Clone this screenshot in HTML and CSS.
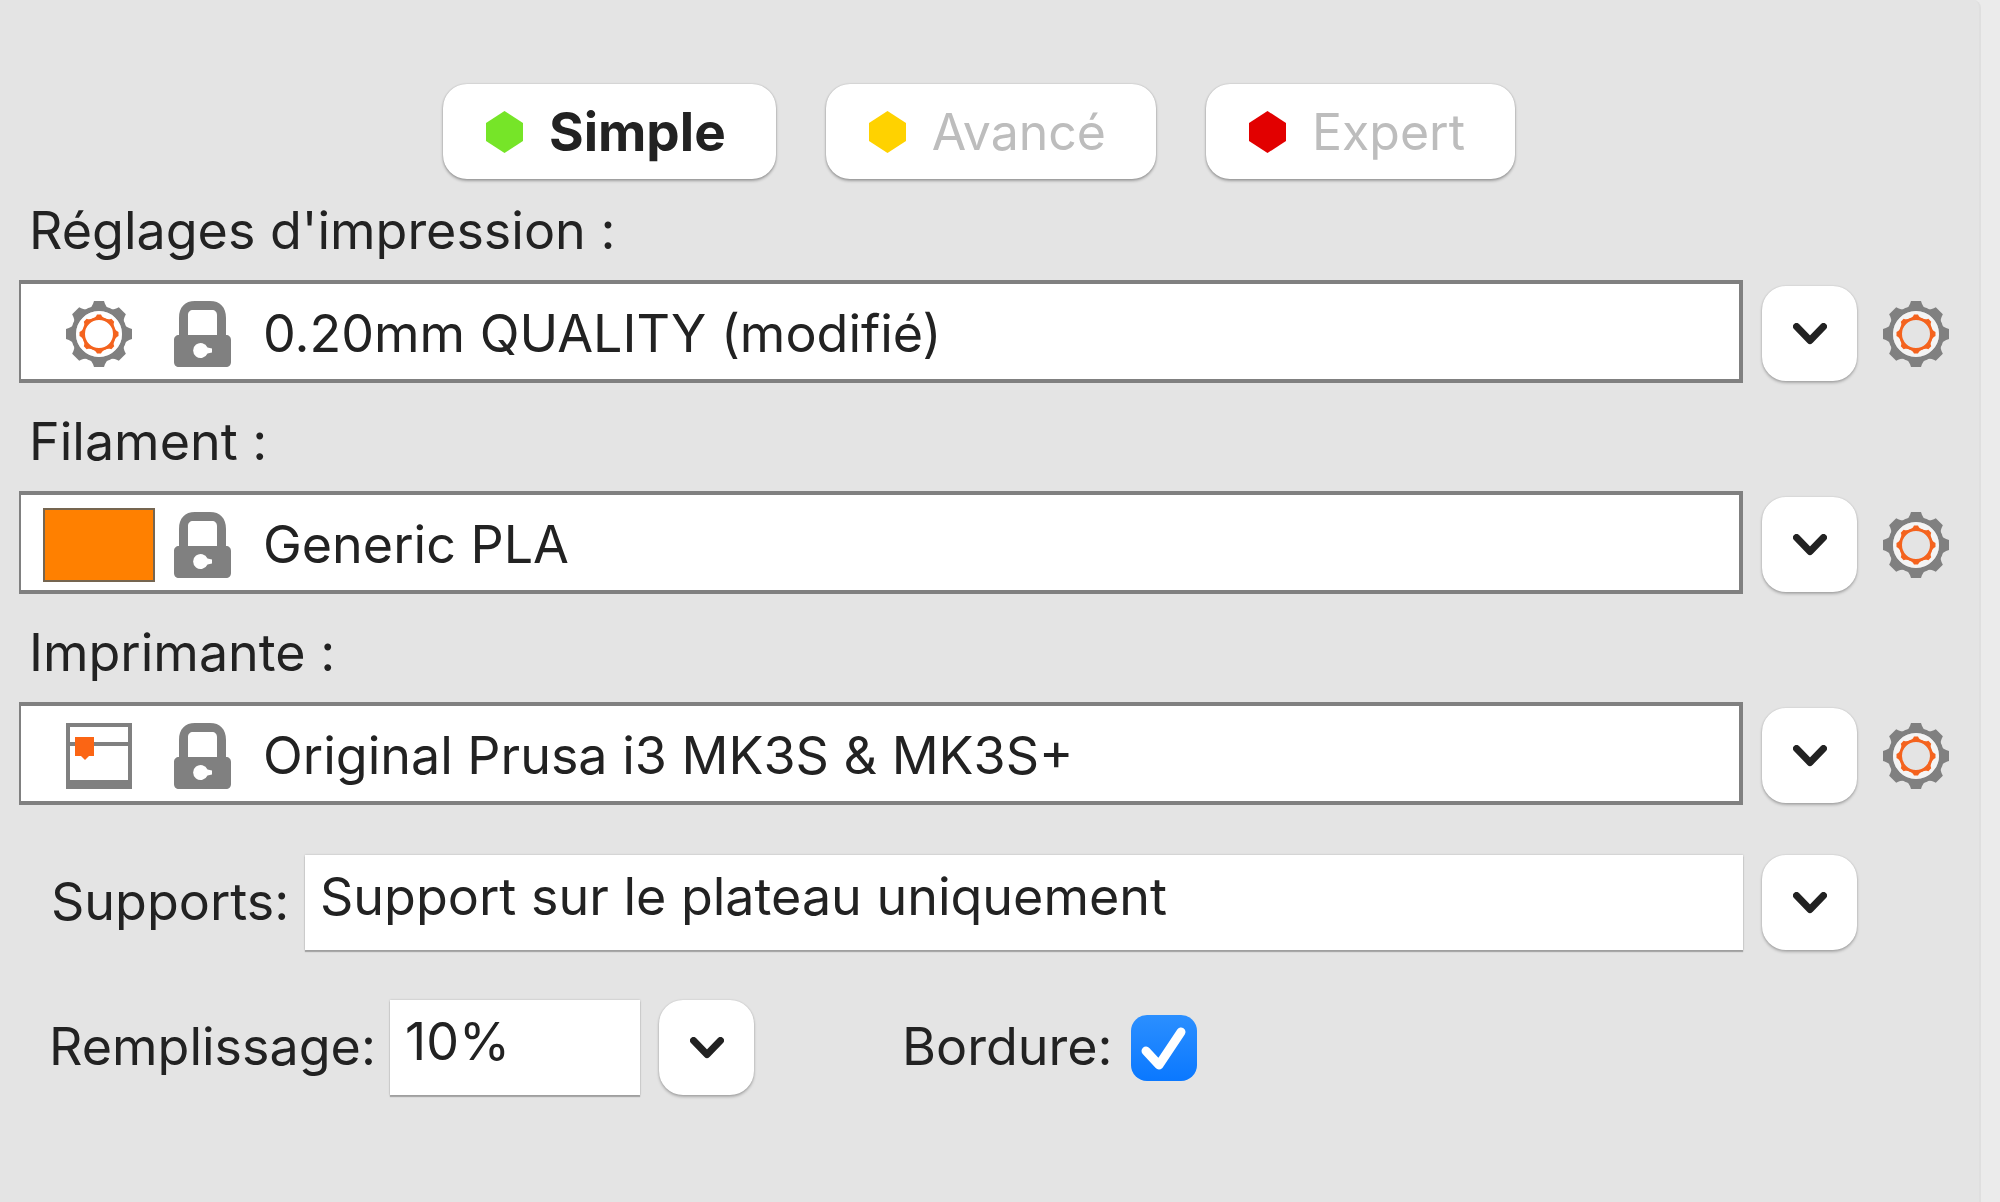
FILE: index.html
```html
<!DOCTYPE html>
<html lang="fr">
<head>
<meta charset="utf-8">
<title>Réglages d'impression</title>
<link rel="stylesheet" href="styles.css">
</head>
<body>
<svg class="defs" aria-hidden="true">
  <symbol id="hex" viewBox="0 0 37 42"><path d="M18.500 0 37 12V30L18.500 42 0 30V12Z"/></symbol>
  <symbol id="chevron" viewBox="0 0 34 22"><path d="M3.500 3.500 17 17.500 30.500 3.500" fill="none" stroke="#222" stroke-width="7" stroke-linecap="round" stroke-linejoin="round"/></symbol>
  <symbol id="gear" viewBox="-33 -33 66 66">
    <g fill="#808080">
      <path id="t" d="M-12-23C-8-26-6-29-5-33H5C6-29 8-26 12-23Z"/>
      <use href="#t" transform="rotate(45)"/><use href="#t" transform="rotate(90)"/><use href="#t" transform="rotate(135)"/><use href="#t" transform="rotate(180)"/><use href="#t" transform="rotate(225)"/><use href="#t" transform="rotate(270)"/><use href="#t" transform="rotate(315)"/>
    </g>
    <circle r="25.500" fill="none" stroke="#808080" stroke-width="5"/>
    <circle r="20" fill="none" stroke="#fff" stroke-width="6" opacity=".6"/>
    <g fill="#f4631e">
      <path id="s" d="M-7-14.500C-5-16-3-17-2-19.500H2C3-17 5-16 7-14.500Z"/>
      <use href="#s" transform="rotate(45)"/><use href="#s" transform="rotate(90)"/><use href="#s" transform="rotate(135)"/><use href="#s" transform="rotate(180)"/><use href="#s" transform="rotate(225)"/><use href="#s" transform="rotate(270)"/><use href="#s" transform="rotate(315)"/>
    </g>
    <circle r="15.500" fill="none" stroke="#f4631e" stroke-width="3"/>
  </symbol>
  <symbol id="lock" viewBox="0 0 57 66">
    <path fill="#808080" fill-rule="evenodd" d="M5 34V17C5 6 11 0 21 0H36C46 0 52 6 52 17V34C55 34 57 36 57 39V61C57 64 55 66 52 66H5C2 66 0 64 0 61V39C0 36 2 34 5 34ZM14 34H43V14C43 11 41 9 38 9H19C16 9 14 11 14 14ZM33.500 46.500A7.500 7.500 0 1 0 33.500 52.500L38 51.500V47.500Z"/>
  </symbol>
  <symbol id="printer" viewBox="0 0 66 66">
    <path fill="#808080" fill-rule="evenodd" d="M0 0H66V66H0ZM4 4V19H62V4ZM4 23V57H62V23Z"/>
    <path fill="#fb6514" d="M9 14H28V33H23L19 37 15 33H9Z"/>
  </symbol>
</svg>

<div class="window">
  <main class="panel">
    <div class="modes">
      <button class="mode mode-active" type="button"><svg class="hex green"><use href="#hex"/></svg>Simple</button>
      <button class="mode" type="button"><svg class="hex yellow"><use href="#hex"/></svg>Avancé</button>
      <button class="mode" type="button"><svg class="hex red"><use href="#hex"/></svg>Expert</button>
    </div>

    <section class="preset">
      <label class="preset-label" for="print">Réglages d'impression :</label>
      <div class="row">
        <div class="combo">
          <span class="slot"><svg class="icon"><use href="#gear"/></svg></span>
          <svg class="lock"><use href="#lock"/></svg>
          <select id="print"><option>0.20mm QUALITY (modifié)</option></select>
        </div>
        <button class="drop" type="button" aria-label="Ouvrir la liste"><svg class="chevron"><use href="#chevron"/></svg></button>
        <button class="edit" type="button" aria-label="Modifier"><svg class="icon"><use href="#gear"/></svg></button>
      </div>
    </section>

    <section class="preset">
      <label class="preset-label" for="filament">Filament :</label>
      <div class="row">
        <div class="combo">
          <span class="slot swatch"></span>
          <svg class="lock"><use href="#lock"/></svg>
          <select id="filament"><option>Generic PLA</option></select>
        </div>
        <button class="drop" type="button" aria-label="Ouvrir la liste"><svg class="chevron"><use href="#chevron"/></svg></button>
        <button class="edit" type="button" aria-label="Modifier"><svg class="icon"><use href="#gear"/></svg></button>
      </div>
    </section>

    <section class="preset">
      <label class="preset-label" for="printer-select">Imprimante :</label>
      <div class="row">
        <div class="combo">
          <span class="slot"><svg class="icon"><use href="#printer"/></svg></span>
          <svg class="lock"><use href="#lock"/></svg>
          <select id="printer-select"><option>Original Prusa i3 MK3S &amp; MK3S+</option></select>
        </div>
        <button class="drop" type="button" aria-label="Ouvrir la liste"><svg class="chevron"><use href="#chevron"/></svg></button>
        <button class="edit" type="button" aria-label="Modifier"><svg class="icon"><use href="#gear"/></svg></button>
      </div>
    </section>

    <div class="option supports">
      <label class="option-label supports-label" for="supports">Supports:</label>
      <select class="field" id="supports"><option>Support sur le plateau uniquement</option></select>
      <button class="drop" type="button" aria-label="Ouvrir la liste"><svg class="chevron"><use href="#chevron"/></svg></button>
    </div>

    <div class="option">
      <label class="option-label infill-label" for="infill">Remplissage:</label>
      <input class="field infill" id="infill" type="text" value="10%">
      <button class="drop" type="button" aria-label="Ouvrir la liste"><svg class="chevron"><use href="#chevron"/></svg></button>
      <label class="option-label brim-label" for="brim">Bordure:</label>
      <span class="check">
        <input id="brim" type="checkbox" checked>
        <svg class="tick" viewBox="0 0 66 66" aria-hidden="true"><path d="M15 36 28 50 50 17" fill="none" stroke="#fff" stroke-width="9" stroke-linecap="round" stroke-linejoin="round"/></svg>
      </span>
    </div>
  </main>
</div>
</body>
</html>
```
FILE: styles.css
```css
* { box-sizing: border-box; }

body {
  margin: 0;
  background: #ebebeb;
  color: #222;
  font: 52px/60px Inter, "Liberation Sans", sans-serif;
}

button, select, input {
  margin: 0;
  padding: 0;
  border: 0;
  color: inherit;
  font: inherit;
  appearance: none;
}

svg { display: block; flex: none; }
.defs { position: absolute; width: 0; height: 0; }

.window { min-height: 100vh; padding-right: 19px; display: flex; }

.panel {
  flex: 1;
  min-width: 0;
  padding: 84px 30px 84px 19px;
  background: #e4e4e4;
  border-right: 2px solid #dfdfdf;
  border-top-right-radius: 8px;
}

.modes {
  display: flex;
  justify-content: center;
  gap: 50px;
  margin-bottom: 22px;
  padding-right: 10px;
}

.mode {
  display: flex;
  align-items: center;
  gap: 26px;
  height: 95px;
  padding: 0 50px 0 43px;
  border-radius: 24px;
  background: #fff;
  color: #bdbdbd;
  font-size: 50px;
  box-shadow: 0 2px 3px rgba(0, 0, 0, .3), 0 0 2px rgba(0, 0, 0, .2);
}
.mode-active { color: #222; font-size: 53px; font-weight: 700; }

.hex { width: 37px; height: 42px; }
.green { fill: #76e528; }
.yellow { fill: #ffd200; }
.red { fill: #e20000; }

.preset { margin-bottom: 29px; }
.preset-label { display: block; margin: 0 0 19px 10px; }

.row { display: flex; align-items: center; }

.combo {
  flex: 1;
  min-width: 0;
  height: 103px;
  display: flex;
  align-items: center;
  padding: 5px 0 0 22px;
  background: #fff;
  border: 4px solid #808080;
  border-left-width: 2px;
}
.combo select { flex: 1; min-width: 0; height: 90px; margin-left: 32px; background: none; }

.slot { width: 112px; display: flex; justify-content: center; margin-right: 19px; }
.swatch { height: 74px; background: #ff8000; border: 2px solid #756550; }
.icon { width: 66px; height: 66px; }
.lock { width: 57px; height: 66px; }

.drop {
  flex: none;
  width: 95px;
  height: 95px;
  margin-left: 19px;
  display: flex;
  align-items: center;
  justify-content: center;
  border-radius: 24px;
  background: #fff;
  box-shadow: 0 2px 3px rgba(0, 0, 0, .25), 0 0 2px rgba(0, 0, 0, .15);
}
.chevron { width: 34px; height: 22px; }
.row .drop, .edit { margin-top: 4px; }
.edit { margin-left: 26px; background: none; }

.option { display: flex; align-items: center; margin-top: 50px; }
.supports { padding-right: 92px; }
.option-label { flex: none; padding-bottom: 2px; }
.supports-label { width: 286px; padding-left: 32px; }
.infill-label { width: 371px; padding-left: 30px; }
.brim-label { width: 229px; margin-left: 148px; }

.field {
  flex: 1;
  min-width: 0;
  height: 95px;
  padding: 0 15px 12px;
  border-radius: 0;
  background: #fff;
  box-shadow: 0 2px 1px rgba(0, 0, 0, .25), 0 0 2px rgba(0, 0, 0, .2);
}
.infill { flex: none; width: 250px; }

.check { position: relative; width: 66px; height: 66px; }
.check input {
  display: block;
  width: 66px;
  height: 66px;
  border-radius: 16px;
  background: linear-gradient(#2b8fff, #0a78ff);
}
.tick { position: absolute; inset: 0; pointer-events: none; }
.check input:not(:checked) { background: #fff; }
```
